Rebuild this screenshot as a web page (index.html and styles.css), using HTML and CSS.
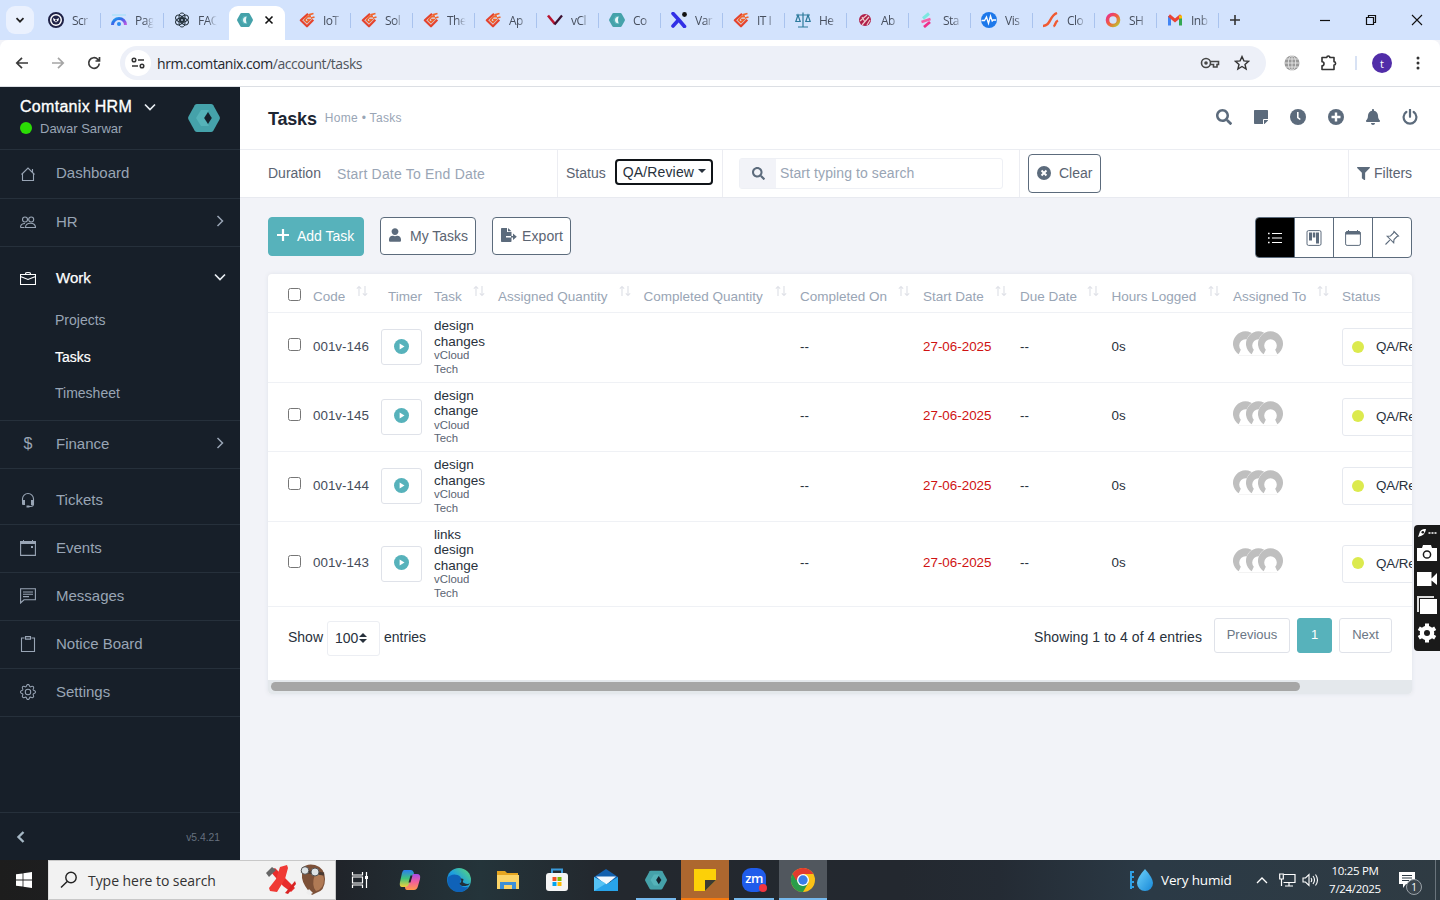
FILE: index.html
```html
<!DOCTYPE html>
<html lang="en">
<head>
<meta charset="utf-8">
<title>Tasks</title>
<link rel="stylesheet" href="styles.css">
</head>
<body>
<svg class="defs" width="0" height="0">
  <defs>
    <linearGradient id="rb" x1="0" y1="0" x2="1" y2="1"><stop offset="0" stop-color="#1fa4f0"/><stop offset=".35" stop-color="#2f6fe8"/><stop offset=".6" stop-color="#6a5ae8"/><stop offset="1" stop-color="#c45ae0"/></linearGradient>
    <linearGradient id="cp1" x1="0" y1="0" x2="0" y2="1"><stop offset="0" stop-color="#2a7df2"/><stop offset=".5" stop-color="#3fc47c"/><stop offset="1" stop-color="#f2d13c"/></linearGradient>
    <linearGradient id="cp2" x1="0" y1="0" x2="0" y2="1"><stop offset="0" stop-color="#a84bea"/><stop offset=".5" stop-color="#f2609a"/><stop offset="1" stop-color="#ff9a4a"/></linearGradient>
    <linearGradient id="edge" x1="0" y1="1" x2="1" y2="0"><stop offset="0" stop-color="#0c59a4"/><stop offset=".5" stop-color="#1d9fe0"/><stop offset="1" stop-color="#5fdc70"/></linearGradient>
    <linearGradient id="ring" x1="0" y1="0" x2="1" y2="1"><stop offset="0" stop-color="#e8308c"/><stop offset=".5" stop-color="#f2603c"/><stop offset="1" stop-color="#b8c832"/></linearGradient>
    <linearGradient id="drop" x1="0" y1="0" x2="1" y2="1"><stop offset="0" stop-color="#6fd2fa"/><stop offset="1" stop-color="#1788d8"/></linearGradient>
  </defs>
  <symbol id="hex" viewBox="0 0 32 28"><path fill="#45a2aa" d="M9 0h14q1.500 0 2.300 1.300L31.500 12.500q.8 1.500 0 3L25.300 26.700Q24.500 28 23 28H9q-1.500 0-2.300-1.300L.5 15.500q-.8-1.500 0-3L6.700 1.300Q7.500 0 9 0z"/><path fill="#55b3b9" d="M13 6h8l-5 8 5 8h-8l-5-8z"/></symbol>
  <symbol id="hexd" viewBox="0 0 32 28"><use href="#hex"/><path fill="#16202b" d="M20 8l3.800 6-3.800 6-3.800-6z"/></symbol>
  <symbol id="hexl" viewBox="0 0 32 28"><use href="#hex"/><path fill="#e8f6f8" d="M19 7q-7 1-7 7t7 7q-2-7 0-14z"/></symbol>
  <symbol id="red" viewBox="0 0 16 16"><path fill="none" stroke="#e5432d" stroke-width="2.200" stroke-linejoin="round" d="M9 1.800L1.800 8.200 8 14.300l6.300-6.500"/><path fill="none" stroke="#f0662f" stroke-width="1.800" d="M12 4.500L8.500 4.500 5.500 8.200 8 10.600l3-3H8M9.500 2.800l5-1.300M12 6l3.500-1"/></symbol>
  <symbol id="sort" viewBox="0 0 12 12"><path fill="none" stroke="#e0e2e8" stroke-width="1.200" d="M3 11V1.500M.8 3.700L3 1.500l2.200 2.200M9 1v9.500M6.800 8.300L9 10.500l2.200-2.200"/></symbol>
  <symbol id="play" viewBox="0 0 16 16"><circle cx="8" cy="8" r="8" fill="#57b2bb"/><path fill="#fff" d="M6 4.800L11.200 8 6 11.200z"/></symbol>
  <symbol id="av" viewBox="0 0 24 24"><circle cx="12" cy="12" r="12" fill="#fff"/><path fill="#bfbfbf" d="M5.500 22.400A12 12 0 1 1 18.500 22.400L16.500 18a6 6 0 1 0-9 0z"/><path fill="#ececec" d="M5.500 23.400h13v1h-13z"/></symbol>
  <symbol id="avs" viewBox="0 0 50 26"><use href="#av" width="25" height="25" x="0"/><use href="#av" width="25" height="25" x="13"/><use href="#av" width="25" height="25" x="25"/></symbol>
  <symbol id="mag" viewBox="0 0 512 512"><path fill="currentColor" d="M505 442.700L405.300 343c-4.500-4.500-10.600-7-17-7H372c27.600-35.300 44-79.700 44-128C416 93.100 322.900 0 208 0S0 93.100 0 208s93.100 208 208 208c48.300 0 92.700-16.400 128-44v16.300c0 6.400 2.500 12.500 7 17l99.700 99.700c9.400 9.400 24.600 9.400 33.900 0l28.300-28.300c9.400-9.400 9.400-24.600.1-34zM208 336c-70.700 0-128-57.200-128-128 0-70.700 57.200-128 128-128 70.700 0 128 57.200 128 128 0 70.700-57.200 128-128 128z"/></symbol>
  <symbol id="gear" viewBox="0 0 16 16"><path fill="currentColor" d="M8 4.754a3.246 3.246 0 1 0 0 6.492 3.246 3.246 0 0 0 0-6.492zM5.754 8a2.246 2.246 0 1 1 4.492 0 2.246 2.246 0 0 1-4.492 0z"/><path fill="currentColor" d="M9.796 1.343c-.527-1.790-3.065-1.790-3.592 0l-.094.319a.873.873 0 0 1-1.255.52l-.292-.16c-1.640-.892-3.433.902-2.540 2.541l.159.292a.873.873 0 0 1-.52 1.255l-.319.094c-1.790.527-1.790 3.065 0 3.592l.319.094a.873.873 0 0 1 .52 1.255l-.16.292c-.892 1.640.901 3.434 2.541 2.540l.292-.159a.873.873 0 0 1 1.255.52l.094.319c.527 1.790 3.065 1.790 3.592 0l.094-.319a.873.873 0 0 1 1.255-.52l.292.16c1.640.893 3.434-.902 2.540-2.541l-.159-.292a.873.873 0 0 1 .52-1.255l.319-.094c1.790-.527 1.790-3.065 0-3.592l-.319-.094a.873.873 0 0 1-.52-1.255l.16-.292c.893-1.640-.902-3.433-2.541-2.540l-.292.159a.873.873 0 0 1-1.255-.52l-.094-.319zm-2.633.283c.246-.835 1.428-.835 1.674 0l.094.319a1.873 1.873 0 0 0 2.693 1.115l.291-.16c.764-.415 1.600.42 1.184 1.185l-.159.292a1.873 1.873 0 0 0 1.116 2.692l.318.094c.835.246.835 1.428 0 1.674l-.319.094a1.873 1.873 0 0 0-1.115 2.693l.16.291c.415.764-.42 1.600-1.185 1.184l-.291-.159a1.873 1.873 0 0 0-2.693 1.116l-.094.318c-.246.835-1.428.835-1.674 0l-.094-.319a1.873 1.873 0 0 0-2.692-1.115l-.292.16c-.764.415-1.600-.42-1.184-1.185l.159-.291A1.873 1.873 0 0 0 1.945 8.930l-.319-.094c-.835-.246-.835-1.428 0-1.674l.319-.094A1.873 1.873 0 0 0 3.060 4.377l-.16-.292c-.415-.764.42-1.600 1.185-1.184l.292.159a1.873 1.873 0 0 0 2.692-1.115l.094-.319z"/></symbol>
</svg>

<header class="tabstrip">
  <div class="tabsearch"><svg width="10" height="10" viewBox="0 0 10 10"><path class="ln2" d="M1.500 3.200L5 6.700l3.500-3.500"/></svg></div>
  <div class="tab w"><svg viewBox="0 0 16 16"><circle cx="8" cy="8" r="7" fill="#fff" stroke="#1f2247" stroke-width="2"/><circle cx="8" cy="8" r="4.500" fill="#1f2247"/><path fill="#fff" d="M5 6l3 1.500L11 6l-.5 2.500L8 10.500 5.500 8.500z"/><circle cx="8" cy="8.500" r="1" fill="#1f2247"/></svg><span>Scr</span></div>
  <div class="tab w"><svg viewBox="0 0 16 16"><path d="M1.500 13A6.500 6.500 0 0 1 14.500 13" fill="none" stroke="url(#rb)" stroke-width="3"/><circle cx="8" cy="12" r="2" fill="#2a8cf0"/><path d="M1 3h14" stroke="#9de0f8" stroke-width="1"/></svg><span>Pag</span></div>
  <div class="tab w nosep"><svg viewBox="0 0 16 16" fill="none" stroke="#23303a" stroke-width="1"><ellipse cx="8" cy="5.200" rx="3" ry="4.200"/><ellipse cx="8" cy="5.200" rx="3" ry="4.200" transform="rotate(60 8 8)"/><ellipse cx="8" cy="5.200" rx="3" ry="4.200" transform="rotate(120 8 8)"/><ellipse cx="8" cy="5.200" rx="3" ry="4.200" transform="rotate(180 8 8)"/><ellipse cx="8" cy="5.200" rx="3" ry="4.200" transform="rotate(240 8 8)"/><ellipse cx="8" cy="5.200" rx="3" ry="4.200" transform="rotate(300 8 8)"/></svg><span>FAQ</span></div>
  <div class="tab active nosep"><svg viewBox="0 0 16 16"><use href="#hexl" y="1" width="16" height="14"/></svg><svg class="x" viewBox="0 0 10 10"><path d="M1.500 1.500l7 7M8.500 1.500l-7 7" stroke="#111" stroke-width="1.600"/></svg></div>
  <div class="tab"><svg><use href="#red"/></svg><span>IoT</span></div>
  <div class="tab"><svg><use href="#red"/></svg><span>Sol</span></div>
  <div class="tab"><svg><use href="#red"/></svg><span>The</span></div>
  <div class="tab"><svg><use href="#red"/></svg><span>Ap</span></div>
  <div class="tab"><svg viewBox="0 0 16 16"><path d="M1 3.500L8 12" stroke="#b81430" stroke-width="2.600"/><path d="M7.500 12.500L15 3.500" stroke="#3c1030" stroke-width="2.200"/></svg><span>vCl</span></div>
  <div class="tab"><svg viewBox="0 0 16 16"><use href="#hexl" y="1" width="16" height="14"/></svg><span>Co</span></div>
  <div class="tab"><svg viewBox="0 0 16 16"><path d="M2 1.500l6 6.500 5.500 6.500M7 8.500L2 14" stroke="#3230e6" stroke-width="3.600" fill="none" stroke-linecap="round"/><circle cx="13.500" cy="2.500" r="2.400" fill="#111"/></svg><span>Var</span></div>
  <div class="tab"><svg><use href="#red"/></svg><span>IT I</span></div>
  <div class="tab"><svg viewBox="0 0 16 16"><path d="M8 .5V15M1 3h14M3 15h10M3 3L.8 9.500h4.400zM13 3l-2.200 6.500h4.400z" fill="none" stroke="#2c7a9c" stroke-width="1.200"/></svg><span>He</span></div>
  <div class="tab"><svg viewBox="0 0 16 16"><circle cx="8" cy="8" r="6" fill="#b0204a"/><path d="M3 9l7-6M5 13l7-8M10 13l3-5M5 5l3 5" stroke="#ecc" stroke-width="1.200"/></svg><span>Ab</span></div>
  <div class="tab"><svg viewBox="0 0 16 16"><path d="M4 6.500l6-5" stroke="#7ce8e0" stroke-width="3"/><path d="M2.500 10l9-3" stroke="#f55fa5" stroke-width="2.600"/><path d="M5 15l6-5" stroke="#ee2f8a" stroke-width="2.800"/></svg><span>Sta</span></div>
  <div class="tab"><svg viewBox="0 0 16 16"><circle cx="8" cy="8" r="8" fill="#1d78ea"/><path d="M.5 8.500h3L5.500 5l2 6.500L9.500 4l1.700 5 1-1h3" fill="none" stroke="#fff" stroke-width="1.300"/></svg><span>Vis</span></div>
  <div class="tab"><svg viewBox="0 0 16 16"><path d="M0 14c8 0 6-10 14-13M10.500 14.500c2.500-1 1-4.500 4.500-6" fill="none" stroke="#f05a32" stroke-width="2.400"/></svg><span>Clo</span></div>
  <div class="tab"><svg viewBox="0 0 16 16"><circle cx="8" cy="8" r="5.500" fill="none" stroke="url(#ring)" stroke-width="3.600"/></svg><span>SH</span></div>
  <div class="tab"><svg viewBox="0 0 16 16"><path d="M2.500 13.500V4" stroke="#4285f4" stroke-width="3"/><path d="M13.500 13.500V4" stroke="#34a853" stroke-width="3"/><path d="M2 3.500l6 5 6-5" fill="none" stroke="#ea4335" stroke-width="3"/><path d="M12 3.500h3v3h-3z" fill="#fbbc04"/></svg><span>Inb</span></div>
  <svg class="newtab" width="12" height="12" viewBox="0 0 12 12"><path d="M6 1v10M1 6h10" stroke="#333" stroke-width="1.600"/></svg>
  <div class="winbtns">
    <svg width="12" height="12" viewBox="0 0 12 12"><path d="M1 6.500h10" stroke="#111" stroke-width="1.200"/></svg>
    <svg width="12" height="12" viewBox="0 0 12 12"><path d="M1.500 3.500h7v7h-7zM3.500 3.500v-2h7v7h-2" fill="none" stroke="#111" stroke-width="1.200"/></svg>
    <svg width="12" height="12" viewBox="0 0 12 12"><path d="M1 1l10 10M11 1L1 11" stroke="#111" stroke-width="1.100"/></svg>
  </div>
</header>

<div class="toolbar">
  <svg class="nav" viewBox="0 0 14 14"><path class="ln" d="M13 7H2M7 1.800L1.800 7 7 12.200"/></svg>
  <svg class="nav dim" viewBox="0 0 14 14"><path class="ln" d="M1 7h11M7 1.800L12.200 7 7 12.200"/></svg>
  <svg class="nav" viewBox="0 0 14 14"><path class="ln" d="M12.300 7.500a5.300 5.300 0 1 1-1.500-4.200l1.500 1.600M12.500 1v4H8.500"/></svg>
  <div class="omni">
    <div class="site"><svg width="14" height="12" viewBox="0 0 14 12"><g fill="none" stroke="#333" stroke-width="1.500"><circle cx="3" cy="3" r="1.800"/><path d="M7 3h6M1 9h6"/><circle cx="11" cy="9" r="1.800"/></g></svg></div>
    <div class="url">hrm.comtanix.com<span>/account/tasks</span></div>
    <svg width="20" height="14" viewBox="0 0 20 14"><g fill="none" stroke="#474747" stroke-width="1.600"><circle cx="6" cy="7" r="4.500"/><path d="M10.200 5.500H18.500v3h-1.500v2.500h-3.500V8.500h-3.300"/></g><circle cx="6" cy="7" r="1.800" fill="#474747"/></svg>
    <svg class="star" width="16" height="16" viewBox="0 0 16 16"><path fill="none" stroke="#333" stroke-width="1.400" d="M8 1.600l1.900 4.300 4.700.4-3.600 3.100 1.100 4.600L8 11.500 3.900 14 5 9.400 1.400 6.300l4.700-.4z"/></svg>
  </div>
  <svg class="globe" width="16" height="16" viewBox="0 0 16 16"><circle cx="8" cy="8" r="7.500" fill="#999"/><path d="M8 0v16M0 8h16M1.500 4h13M1.500 12h13" stroke="#eee" stroke-width=".8"/><ellipse cx="8" cy="8" rx="3.700" ry="7.500" fill="none" stroke="#eee" stroke-width=".8"/></svg>
  <svg class="ext" width="18" height="18" viewBox="0 0 18 18"><path d="M2 3.500h4.800a1.500 1.500 0 0 1 3 0H14v4.300a1.600 1.600 0 0 1 0 3.200V15.500H2v-3.700a2 2 0 0 0 0-4z" fill="none" stroke="#333" stroke-width="1.600" stroke-linejoin="round"/></svg>
  <i class="tsep"></i>
  <div class="profile">t</div>
  <svg class="dots" width="4" height="16" viewBox="0 0 4 16" fill="#333"><circle cx="2" cy="3" r="1.500"/><circle cx="2" cy="8" r="1.500"/><circle cx="2" cy="13" r="1.500"/></svg>
</div>

<div class="app">
  <aside class="side">
    <div class="brand">
      <div class="names"><div class="bname">Comtanix HRM <svg width="12" height="8" viewBox="0 0 12 8"><path d="M1 1.500l5 5 5-5" fill="none" stroke="#e8edf2" stroke-width="1.700"/></svg></div><div class="user"><i></i>Dawar Sarwar</div></div>
      <svg width="32" height="28"><use href="#hexd"/></svg>
    </div>
    <a class="item"><svg viewBox="0 0 16 16"><path d="M2.500 7.500V14.500h11V7.500M1.500 8.500L8 2l6.500 6.500M12.500 6V3"/></svg>Dashboard</a>
    <a class="item"><svg viewBox="0 0 16 16"><circle cx="5" cy="5.500" r="2.500"/><circle cx="11.200" cy="5.500" r="2.500"/><path d="M.5 13.500c0-3 2-4 4.500-4M5.500 13.500c0-3 2-4.200 5-4.200s5 1.200 5 4.200zM.5 13.500h4"/></svg>HR<svg class="chev" viewBox="0 0 8 12"><path d="M1.500 1l5 5-5 5"/></svg></a>
    <div class="group">
      <a class="sub0"><svg viewBox="0 0 16 16"><path d="M.5 4.500h15v10H.5zM5.500 4.500c0-2 .5-2 2.500-2s2.500 0 2.500 2M.5 6.500L8 9.500l7.500-3"/></svg>Work<svg class="down" viewBox="0 0 12 8"><path d="M1 1.500l5 5 5-5"/></svg></a>
      <a class="sub">Projects</a><a class="sub on">Tasks</a><a class="sub">Timesheet</a>
    </div>
    <a class="item"><b class="dollar">$</b>Finance<svg class="chev" viewBox="0 0 8 12"><path d="M1.500 1l5 5-5 5"/></svg></a>
    <a class="item tall"><svg viewBox="0 0 16 16"><path d="M2.500 9V7a5.500 5.500 0 0 1 11 0v5c0 1.500-1 2.500-3 2.500H8"/><path class="fl" d="M2 8h3v5H3a1 1 0 0 1-1-1zM11 8h3v5h-3zM6.500 13.500h3v2h-3z"/></svg>Tickets</a>
    <a class="item"><svg viewBox="0 0 16 16"><path d="M.6 2.500h14.800v12.900H.6z"/><path class="fl" d="M0 1h3V0h1v1h8V0h1v1h3v3H0zM11 6h2v2h-2z"/></svg>Events</a>
    <a class="item"><svg viewBox="0 0 16 16"><path d="M.6.8h14.800v11H4L.6 15zM3 4h10M3 6.300h10M3 8.600h6"/></svg>Messages</a>
    <a class="item"><svg viewBox="0 0 16 16"><path d="M4.500 2h-3v13.500h13V2h-3M5.500.6h5v2.500h-5z"/></svg>Notice Board</a>
    <a class="item"><svg class="ns"><use href="#gear"/></svg>Settings</a>
    <div class="sfoot"><svg width="9" height="12" viewBox="0 0 9 12"><path d="M7.500 1L2.500 6l5 5" fill="none" stroke="#a5b7c4" stroke-width="2.400"/></svg><span>v5.4.21</span></div>
  </aside>

  <main class="main">
    <div class="top">
      <h1>Tasks</h1><span class="crumb">Home • Tasks</span>
      <div class="tools">
        <svg><use href="#mag"/></svg>
        <svg viewBox="0 0 448 512"><path d="M312 320h136V56c0-13.300-10.700-24-24-24H24C10.700 32 0 42.700 0 56v400c0 13.300 10.700 24 24 24h264V344c0-13.200 10.800-24 24-24zm129 55l-98 98c-4.500 4.500-10.600 7-17 7h-6V352h128v6.100c0 6.300-2.500 12.400-7 16.900z"/></svg>
        <svg viewBox="0 0 16 16"><circle cx="8" cy="8" r="8"/><path d="M7.800 3v5.500l2.500 2" fill="none" stroke="#fff" stroke-width="1.600"/></svg>
        <svg viewBox="0 0 16 16"><circle cx="8" cy="8" r="8"/><path d="M8 3.500v9M3.500 8h9" stroke="#fff" stroke-width="2.400"/></svg>
        <svg viewBox="0 0 448 512"><path d="M224 512c35.320 0 63.970-28.650 63.970-64H160.030c0 35.350 28.650 64 63.970 64zm215.390-149.710c-19.320-20.760-55.470-51.990-55.470-154.290 0-77.700-54.480-139.900-127.940-155.160V32c0-17.670-14.320-32-31.980-32s-31.980 14.330-31.980 32v20.840C118.560 68.100 64.080 130.300 64.080 208c0 102.300-36.150 133.530-55.470 154.290-6 6.450-8.660 14.160-8.610 21.710.11 16.400 12.980 32 32.100 32h383.800c19.120 0 32-15.600 32.100-32 .05-7.550-2.610-15.270-8.610-21.710z"/></svg>
        <svg viewBox="0 0 16 16"><path d="M4.300 3a6.400 6.400 0 1 0 7.400 0M8 .8v7" fill="none" stroke="#5c6b7c" stroke-width="2.200" stroke-linecap="round"/></svg>
      </div>
    </div>
    <div class="filters">
      <div class="f-dur"><span>Duration</span><em>Start Date To End Date</em></div>
      <div class="f-status"><span>Status</span><div class="sel">QA/Review<i></i></div></div>
      <div class="f-search"><div class="sbox"><b><svg width="13" height="13"><use href="#mag"/></svg></b><span>Start typing to search</span></div></div>
      <div class="clear"><svg width="14" height="14" viewBox="0 0 16 16"><circle cx="8" cy="8" r="8" fill="#5c6b7c"/><path d="M5.200 5.200l5.600 5.600M10.800 5.200l-5.600 5.600" stroke="#fff" stroke-width="2.200"/></svg>Clear</div>
      <div class="f-more"><svg width="13" height="13" viewBox="0 0 512 512"><path fill="#5c6b7c" d="M487.976 0H24.028C2.710 0-8.047 25.866 7.058 40.971L192 225.941V432c0 7.831 3.821 15.170 10.237 19.662l80 55.980C298.020 518.690 320 507.493 320 487.980V225.941l184.947-184.970C520.021 25.896 509.338 0 487.976 0z"/></svg>Filters</div>
    </div>
    <div class="content">
      <div class="actions">
        <div class="btn add"><svg width="12" height="12" viewBox="0 0 12 12"><path d="M6 0v12M0 6h12" stroke="#fff" stroke-width="2.200"/></svg>Add Task</div>
        <div class="btn my"><svg width="12" height="14" viewBox="0 0 448 512"><path fill="#5c6b7c" d="M224 256c70.700 0 128-57.300 128-128S294.700 0 224 0 96 57.300 96 128s57.300 128 128 128zm89.600 32h-16.700c-22.200 10.200-46.900 16-72.900 16s-50.600-5.800-72.900-16h-16.700C60.200 288 0 348.200 0 422.400V464c0 26.500 21.500 48 48 48h352c26.500 0 48-21.500 48-48v-41.600c0-74.200-60.200-134.400-134.400-134.400z"/></svg>My Tasks</div>
        <div class="btn exp"><svg width="16" height="14" viewBox="0 0 16 14"><path fill="#5c6b7c" d="M0 .8A.8.800 0 0 1 .8 0H6v4h4.500v4H5v1.500h5.500v3.700a.8.800 0 0 1-.8.800H.8a.8.800 0 0 1-.8-.8zM7 0l3.500 3.300H7zM12 5.500l3.800 3.200L12 12V9.500H10V8h2z"/></svg>Export</div>
        <div class="views">
          <div class="on"><svg viewBox="0 0 16 16"><path d="M5 3.500h10M5 8h10M5 12.500h10" stroke="#fff" stroke-width="1.100"/><path d="M1 2.700h1.600v1.600H1zM1 7.200h1.600v1.600H1zM1 11.700h1.600v1.600H1z" fill="#fff"/></svg></div>
          <div><svg viewBox="0 0 16 16"><rect x="1" y=".6" width="14" height="14.800" rx="1.500" fill="none" stroke="#5c6b7c"/><path d="M3 2.500h3v8H3zM6.800 2.500h2.500v5H6.800zM10 2.500h3v11h-3z" fill="#5c6b7c"/></svg></div>
          <div><svg viewBox="0 0 16 16"><rect x=".6" y="1.600" width="14.800" height="13.800" rx="1.500" fill="none" stroke="#5c6b7c"/><path d="M.5 4.500V2.500L2 1h1V0h1v1h8V0h1v1h1l1.500 1.500v2z" fill="#5c6b7c"/></svg></div>
          <div><svg viewBox="0 0 16 16"><path d="M10 1.500L14.500 6l-1.500.5-3 3-.3 3.300L3.200 6.300l3.300-.3 3-3zM5.800 10.200L1.500 14.500" fill="none" stroke="#5c6b7c" stroke-width="1.100"/></svg></div>
        </div>
      </div>
      <section class="card">
        <div class="row head">
          <i class="cb"></i><span>Code<svg><use href="#sort"/></svg></span><span class="tm">Timer</span><span>Task<svg><use href="#sort"/></svg></span><span>Assigned Quantity<svg><use href="#sort"/></svg></span><span>Completed Quantity<svg><use href="#sort"/></svg></span><span>Completed On<svg><use href="#sort"/></svg></span><span>Start Date<svg><use href="#sort"/></svg></span><span>Due Date<svg><use href="#sort"/></svg></span><span>Hours Logged<svg><use href="#sort"/></svg></span><span>Assigned To<svg><use href="#sort"/></svg></span><span>Status</span>
        </div>
        <div class="row"><i class="cb"></i><span class="code">001v-146</span><div class="pl"><svg><use href="#play"/></svg></div><div class="task"><b>design<br>changes</b><small>vCloud<br>Tech</small></div><span></span><span></span><span>--</span><span class="red">27-06-2025</span><span>--</span><span>0s</span><svg class="avs"><use href="#avs"/></svg><div class="st"><i></i>QA/Review</div></div>
        <div class="row"><i class="cb"></i><span class="code">001v-145</span><div class="pl"><svg><use href="#play"/></svg></div><div class="task"><b>design<br>change</b><small>vCloud<br>Tech</small></div><span></span><span></span><span>--</span><span class="red">27-06-2025</span><span>--</span><span>0s</span><svg class="avs"><use href="#avs"/></svg><div class="st"><i></i>QA/Review</div></div>
        <div class="row"><i class="cb"></i><span class="code">001v-144</span><div class="pl"><svg><use href="#play"/></svg></div><div class="task"><b>design<br>changes</b><small>vCloud<br>Tech</small></div><span></span><span></span><span>--</span><span class="red">27-06-2025</span><span>--</span><span>0s</span><svg class="avs"><use href="#avs"/></svg><div class="st"><i></i>QA/Review</div></div>
        <div class="row"><i class="cb"></i><span class="code">001v-143</span><div class="pl"><svg><use href="#play"/></svg></div><div class="task"><b>links<br>design<br>change</b><small>vCloud<br>Tech</small></div><span></span><span></span><span>--</span><span class="red">27-06-2025</span><span>--</span><span>0s</span><svg class="avs"><use href="#avs"/></svg><div class="st"><i></i>QA/Review</div></div>
        <div class="tfoot">
          <span>Show</span><div class="len">100<svg width="8" height="10" viewBox="0 0 8 10"><path fill="#28313c" d="M4 0l4 4H0zM4 10L0 6h8z"/></svg></div><span>entries</span>
          <span class="info">Showing 1 to 4 of 4 entries</span>
          <div class="pg prev">Previous</div><div class="pg cur">1</div><div class="pg next">Next</div>
        </div>
        <div class="scroll"><i></i></div>
      </section>
    </div>
  </main>
</div>

<div class="rec">
  <svg width="20" height="10" viewBox="0 0 20 10"><path d="M1 9L3 3.500C4.500 1.500 6 1 9 1 8.500 4 7.500 6 5 7.500z" fill="#fff"/><circle cx="5.800" cy="4.200" r="1.300" fill="#1a1a1a"/><path d="M11.500 5h2M14.500 5h2M17.500 5h2" stroke="#fff" stroke-width="1.500"/></svg>
  <svg width="20" height="17" viewBox="0 0 20 17"><path fill="#fff" d="M0 3h5l1-3h8l1 3h5v13H0z"/><circle cx="10" cy="9.500" r="3.600" fill="none" stroke="#1a1a1a" stroke-width="1.500"/></svg>
  <svg width="20" height="14" viewBox="0 0 20 14"><path fill="#fff" d="M0 0h14.500v14H0zM14.500 6.500L20 1v12l-5.500-4.500z"/></svg>
  <svg width="20" height="18" viewBox="0 0 20 18"><path fill="#ddd" d="M0 0h17v2H2v14H0z"/><path fill="#fff" d="M3 3h17v15H3z"/></svg>
  <svg width="20" height="20" viewBox="0 0 20 20"><circle cx="10" cy="10" r="5" fill="none" stroke="#fff" stroke-width="4.500"/><path d="M10 .5v19M1.800 5.200l16.400 9.600M1.800 14.800l16.400-9.600" stroke="#fff" stroke-width="4"/><circle cx="10" cy="10" r="3" fill="#1a1a1a"/></svg>
</div>

<footer class="taskbar">
  <div class="start"><svg width="16" height="16" viewBox="0 0 16 16"><path fill="#fff" d="M0 2.300L6.600 1.400V7.600H0zM7.400 1.300L16 0v7.600H7.400zM0 8.400h6.600v6.200L0 13.700zM7.400 8.400H16V16l-8.600-1.300z"/></svg></div>
  <div class="wsearch">
    <svg width="18" height="18" viewBox="0 0 18 18"><circle cx="11" cy="6.500" r="5.200" fill="none" stroke="#222" stroke-width="1.400"/><path d="M7.200 10.500L1 16.500" stroke="#222" stroke-width="1.500"/></svg>
    <span>Type here to search</span>
    <svg class="plane" width="62" height="32" viewBox="0 0 62 32"><path d="M5 7l5-3 14 14 6 6-4 4-8-6z" fill="#e82c2c"/><path d="M15 3l7-2 1 3-3 11-8 13-7-1-1-3 7-9z" fill="#f03a35"/><path d="M30 17l1 3-8 10-3-1z" fill="#d82424"/><path d="M1 9l6-6 4 3-7 7z" fill="#666"/><path d="M37 4q5-5 13-3 10 3 10 14 0 12-9 14l-4 2q-9-10-10-17z" fill="#7d5138"/><path d="M50 10q8-2 9 5 0 10-8 12-5-5-1-17z" fill="#b07a55"/><path d="M36 7l23 3" stroke="#4a3a32" stroke-width="3"/><circle cx="40" cy="6.500" r="3.800" fill="#dde3e6" stroke="#555"/><circle cx="50" cy="8" r="4" fill="#dde3e6" stroke="#555"/><path d="M41 29l3-4 4 4-4 2z" fill="#eee"/></svg>
  </div>
  <div class="ti"><svg width="18" height="18" viewBox="0 0 18 18"><path d="M1.500 1v3h10V1M1.500 17v-3h10v3M1.500 6h10v6h-10zM15.500 1v16" fill="none" stroke="#fff" stroke-width="1.200"/><path fill="#fff" d="M14 5h3v3h-3z"/></svg></div>
  <div class="ti w52"><svg width="24" height="24" viewBox="0 0 24 24"><path d="M6 2h7q2 0 3 3l-3 11q-1 3-4 3H4q-3 0-2-5l2-9q1-3 2-3z" fill="url(#cp1)"/><path d="M15 6h4q4 0 3 5l-2 7q-1 4-4 4H9q-2 0-2-3 3 0 4-3l3-8z" fill="url(#cp2)"/><path d="M12.500 7.500h2l-2 7h-2z" fill="#22262c"/></svg></div>
  <div class="ti w46"><svg width="24" height="24" viewBox="0 0 24 24"><circle cx="12" cy="12" r="12" fill="url(#edge)"/><path d="M.5 10q4-5 10-3 5 2 3 6-2 5 3 6 3 .5 5-.5-4 6-10 5.500Q1 23 .5 10z" fill="#0f62b8"/><path d="M13.500 10.500q2 3-1 5 1 3 6 2.500 3-.5 4.500-2.500-3 1-6-.5-2-1-.5-3 .5-2-3-1.500z" fill="#22303a"/></svg></div>
  <div class="ti w52"><svg width="22" height="20" viewBox="0 0 22 20"><path fill="#e5a520" d="M0 1h8l2 2h11v5H0z"/><path fill="#fbd468" d="M0 5h22v14H0z"/><path fill="#3d8fd8" d="M3 19v-7h16v7h-4v-4H7v4z"/></svg></div>
  <div class="ti w46"><svg width="24" height="24" viewBox="0 0 24 24"><path d="M7 6V1.500h10V6" fill="none" stroke="#3a9bdc" stroke-width="2"/><rect x="1" y="5" width="22" height="18" rx="3" fill="#f5f5f5"/><path fill="#f25022" d="M7.500 9h4v4h-4z"/><path fill="#7fba00" d="M12.500 9h4v4h-4z"/><path fill="#00a4ef" d="M7.500 14h4v4h-4z"/><path fill="#ffb900" d="M12.500 14h4v4h-4z"/></svg></div>
  <div class="ti w52"><svg width="24" height="22" viewBox="0 0 24 22"><path fill="#1360ad" d="M0 8L12 0l12 8v4H0z"/><path fill="#f4f8fc" d="M2 7.500h20L12 16z"/><path fill="#28a4ea" d="M0 8l12 7.500L24 8v14H0z"/><path fill="#55c3f5" d="M0 22l12-7.500L0 8z"/></svg></div>
  <div class="ti run hexrun"><svg width="22" height="20"><use href="#hexd"/></svg></div>
  <div class="ti note"><svg width="22" height="22" viewBox="0 0 22 22"><path fill="#fcd008" d="M0 0h22v11L11 22H0z"/><path fill="#3c3a33" d="M11 22V11h11z"/></svg></div>
  <div class="ti run zoom"><div>zm<i></i></div></div>
  <div class="ti chrome"><svg width="24" height="24" viewBox="0 0 24 24"><circle cx="12" cy="12" r="12" fill="#fbc116"/><path d="M12 12L1.600 6A12 12 0 0 0 12 24l5.200-9z" fill="#2a9d4a"/><path d="M1.600 6A12 12 0 0 1 22.400 6H12v6H5z" fill="#e33b2e"/><circle cx="12" cy="12" r="6" fill="#fff"/><circle cx="12" cy="12" r="4.700" fill="#3a7de8"/></svg></div>
  <div class="tray">
    <svg width="26" height="24" viewBox="0 0 26 24"><path d="M3 3v18M2 4h4M2 9h4M2 14h4M2 19h4" stroke="#2fa0e4" stroke-width="2"/><path fill="url(#drop)" d="M17 1q8 9 8 14a8 8 0 0 1-16 0q0-5 8-14z"/></svg>
    <span class="hum">Very humid</span>
    <svg class="up" width="12" height="8" viewBox="0 0 12 8"><path d="M1 7l5-5 5 5" fill="none" stroke="#fff" stroke-width="1.300"/></svg>
    <svg class="net" width="17" height="14" viewBox="0 0 17 14"><path d="M5 1.500h11v8H4.500M10 9.500V13M6 13h8M2.500 6v7M.7 1h3.600v5H.7z" fill="none" stroke="#fff" stroke-width="1.200"/></svg>
    <svg class="vol" width="17" height="14" viewBox="0 0 17 14"><path d="M1 5h2.500L7 1.500v11L3.500 9H1zM9 5q1.500 2 0 4M11 3q3 4 0 8M13.500 1.500q4 5.500 0 11" fill="none" stroke="#fff" stroke-width="1.100"/></svg>
    <div class="clock">10:25 PM<br>7/24/2025</div>
    <div class="notif"><svg width="17" height="17" viewBox="0 0 17 17"><path fill="#fff" d="M0 0h16v12H7l-3 4v-4H0z"/><path d="M3 3.500h10M3 6h10M3 8.500h7" stroke="#2d3a44" stroke-width="1.100"/></svg><i>1</i></div>
  </div>
</footer>
</body>
</html>
```
FILE: styles.css
```css
* { box-sizing: border-box; }
body { margin: 0; width: 1440px; height: 900px; overflow: hidden; display: flex; flex-direction: column; font-family: "Liberation Sans", Arial, sans-serif; font-size: 14px; color: #28313c; background: #f2f3f8; position: relative; }
svg { display: block; flex: none; }
i, em { font-style: normal; }
.defs { position: absolute; }

/* browser chrome */
.tabstrip { height: 40px; flex: none; background: #d3e3fd; display: flex; align-items: center; padding-left: 6px; font-family: "Open Sans", sans-serif; font-size: 12px; color: #474f5e; }
.tabsearch { width: 28px; height: 28px; border-radius: 9px; background: #eaf1fe; display: flex; align-items: center; justify-content: center; margin-right: 4px; }
.ln2 { fill: none; stroke: #222; stroke-width: 1.7; }
.tab { width: 62px; height: 40px; flex: none; display: flex; align-items: center; padding-left: 10px; gap: 8px; background: linear-gradient(#a9c3ee, #a9c3ee) right 13px / 1px 15px no-repeat; }
.tab.w { width: 63px; }
.tab svg { width: 16px; height: 16px; }
.tab span { width: 22px; white-space: nowrap; letter-spacing: -.5px; -webkit-mask-image: linear-gradient(90deg, #000 45%, transparent 85%); mask-image: linear-gradient(90deg, #000 45%, transparent 85%); }
.tab.nosep { background: none; }
.tab.active { margin: 6px 4px 0 2px; width: 56px; height: 34px; background: #fff; border-radius: 9px 9px 0 0; padding: 0 0 6px 8px; gap: 11px; }
.tab.active .x { width: 10px; height: 10px; }
.newtab { margin-left: 10px; }
.winbtns { margin-left: auto; display: flex; gap: 34px; padding-right: 17px; }
.toolbar { height: 46px; flex: none; background: #fff; border-radius: 8px 8px 0 0; display: flex; align-items: center; padding-left: 15px; font-family: "Open Sans", sans-serif; }
.nav { width: 14px; height: 14px; margin-right: 22px; }
.nav.dim { opacity: .45; }
.ln { fill: none; stroke: #3a3a3a; stroke-width: 1.7; }
.omni { width: 1146px; height: 34px; margin-left: -3px; border-radius: 17px; background: #edf0f8; display: flex; align-items: center; padding: 0 16px 0 5px; }
.site { width: 26px; height: 26px; border-radius: 13px; background: #fff; display: flex; align-items: center; justify-content: center; margin-right: 6px; }
.url { flex: 1; font-size: 14px; letter-spacing: -.45px; color: #24272c; }
.url span { color: #50555c; }
.star { margin-left: 14px; }
.globe { margin-left: 18px; }
.ext { margin-left: 20px; }
.tsep { width: 2px; height: 14px; background: #d8e2f4; margin: 0 15px 0 17px; }
.profile { width: 20px; height: 20px; border-radius: 50%; background: #512da8; color: #fff; font-size: 11px; display: flex; align-items: center; justify-content: center; }
.dots { margin-left: 24px; }

/* application shell */
.app { height: 774px; flex: none; display: flex; border-top: 1px solid #dcdfe4; }
.side { width: 240px; flex: none; background: #171f29; color: #99a5b5; display: flex; flex-direction: column; font-size: 15px; }
.brand { height: 63px; flex: none; display: flex; justify-content: space-between; padding: 11px 20px 0; border-bottom: 1px solid #26303b; }
.brand > svg { margin-top: 6px; }
.bname { color: #fff; font-size: 16px; line-height: 18px; letter-spacing: .3px; -webkit-text-stroke: .35px #fff; display: flex; align-items: center; gap: 12px; }
.user { font-size: 13px; line-height: 16px; margin-top: 5px; display: flex; align-items: center; gap: 8px; }
.user i { width: 12px; height: 12px; border-radius: 50%; background: #2bdc05; margin-top: -3px; }
.item { height: 48px; flex: none; display: flex; align-items: center; padding: 0 16px 3px 20px; border-bottom: 1px solid #26303b; }
.brand + .item { height: 49px; }
.item.tall { height: 56px; padding-top: 7px; padding-bottom: 2px; }
.side a svg { width: 16px; height: 16px; margin: 2px 20px 0 0; fill: none; stroke: #99a5b5; stroke-width: 1.1; }
.side a svg .fl { fill: #99a5b5; stroke: none; }
.side a svg.ns { stroke: none; }
.side a svg.chev { width: 8px; height: 12px; margin: 0 0 0 auto; stroke-width: 1.5; }
.side a svg.down { width: 12px; height: 8px; margin: 0 0 0 auto; stroke-width: 1.7; stroke: #e8edf2; }
.dollar { width: 16px; margin-right: 20px; text-align: center; font-weight: 400; font-size: 16px; padding-top: 2px; }
.group { height: 174px; flex: none; padding-top: 15px; border-bottom: 1px solid #26303b; }
.sub0 { height: 30px; display: flex; align-items: center; padding: 0 14px 0 20px; color: #fff; -webkit-text-stroke: .25px #fff; }
.side a.sub0 svg:first-child { stroke: #fff; }
.sub { display: block; height: 36.500px; line-height: 36.500px; padding-left: 55px; font-size: 14px; }
.sub0 + .sub { margin-top: 10px; }
.sub.on { color: #fff; -webkit-text-stroke: .2px #fff; }
.sfoot { margin-top: auto; height: 48px; flex: none; border-top: 1px solid #26303b; display: flex; align-items: center; justify-content: space-between; padding: 1px 20px 0 16px; font-size: 10.300px; color: #66717f; }

.main { flex: 1; min-width: 0; display: flex; flex-direction: column; }
.top { height: 63px; flex: none; background: #fff; border-bottom: 1px solid #ebedf2; display: flex; align-items: center; padding: 0 22px 0 28px; }
h1 { margin: 2px 8px 0 0; font-size: 18px; letter-spacing: -.2px; color: #1d2633; }
.crumb { font-size: 12px; letter-spacing: .32px; color: #99a5b5; }
.tools { margin-left: auto; display: flex; gap: 21.200px; padding-bottom: 2px; }
.tools svg { width: 16px; height: 16px; fill: #5c6b7c; color: #5c6b7c; }
.filters { height: 48px; flex: none; background: #fff; border-bottom: 1px solid #e8eaf0; display: flex; align-items: center; color: #5b6472; }
.filters > div { display: flex; align-items: center; }
.f-dur { width: 318px; height: 47px; padding-left: 28px; gap: 16px; border-right: 1px solid #ecedf2; }
.f-dur > span, .f-status > span, .sbox span { margin-top: -1px; }
.f-dur em { color: #99a5b5; letter-spacing: .2px; padding-top: 1px; }
.f-status { width: 165px; height: 47px; padding-left: 8px; gap: 9px; border-right: 1px solid #ecedf2; }
.sel { width: 98px; height: 26px; border: 2px solid #101418; border-radius: 4px; color: #28313c; margin-top: -4px; padding: 1px 5px 0 6px; letter-spacing: .15px; display: flex; align-items: center; gap: 4px; }
.sel i { border: 4px solid transparent; border-top-color: #28313c; border-bottom: 0; margin-top: -2px; }
.f-search { width: 297px; height: 47px; padding-left: 16px; border-right: 1px solid #ecedf2; }
.sbox { width: 264px; height: 31px; border: 1px solid #eef0f5; border-radius: 3px; display: flex; align-items: center; color: #99a5b5; letter-spacing: .1px; }
.sbox b { width: 36px; height: 29px; background: #f2f3f8; display: flex; align-items: center; justify-content: center; color: #5c6b7c; margin-right: 4px; }
.clear { width: 73px; height: 39px; margin-left: 8px; border: 1px solid #5c6b7c; border-radius: 4px; padding: 0 0 1px 8px; gap: 8px; }
.f-more { margin-left: auto; height: 47px; width: 92px; border-left: 1px solid #ecedf2; padding: 0 0 1px 8px; gap: 4px; }
.content { flex: 1; padding: 19px 28px 0; }
.actions { height: 57px; display: flex; align-items: flex-start; color: #5b6472; }
.btn { height: 38px; display: flex; align-items: center; background: #fff; border: 1px solid #5c6b7c; border-radius: 4px; padding-left: 8px; gap: 9px; margin-right: 16px; }
.btn svg { margin-top: -2px; }
.btn.add { width: 96px; height: 39px; padding-bottom: 1px; gap: 8px; background: #57b2bb; border-color: #57b2bb; color: #fff; }
.btn.my { width: 96px; }
.btn.exp { width: 79px; gap: 5px; letter-spacing: .1px; }
.views { margin-left: auto; height: 41px; display: flex; border: 1px solid #5c6b7c; border-radius: 4px; overflow: hidden; background: #fff; }
.views div { width: 39px; display: flex; align-items: center; justify-content: center; border-left: 1px solid #5c6b7c; }
.views div.on { width: 38px; background: #000; border: 0; }
.views svg { width: 16px; height: 16px; }
.card { width: 1144px; height: 420px; background: #fff; overflow: hidden; border-radius: 4px; box-shadow: 0 0 4px #dfe2e9; font-size: 13.4px; display: flex; flex-direction: column; }
.row { display: grid; grid-template-columns: 25px 68px 53px 64px 145.500px 156.500px 123px 97px 91.500px 121.500px 109px 110px; padding-left: 20px; align-items: center; flex: none; border-bottom: 1px solid #eff1f5; height: 69.500px; width: 1184px; }
.row:nth-child(5) { height: 85px; }
.row.head { height: 39px; color: #99a5b5; font-size: 13.5px; }
.row.head span { display: flex; justify-content: space-between; align-items: center; padding: 6px 13px 0 0; white-space: nowrap; }
.row.head span.tm { padding-left: 7px; }
.row.head svg { width: 12px; height: 12px; margin-top: -10px; }
.cb { width: 13px; height: 13px; border: 1px solid #767676; border-radius: 2.5px; background: #fff; margin-top: -5px; }
.head .cb { margin-top: 2px; }
.row:not(.head) > span { margin-top: -2px; }
.row .code { color: #454c5a; }
.red { color: #cf1212; }
.pl { width: 41px; height: 36px; border: 1px solid #dfe2e9; border-radius: 3px; display: flex; align-items: center; justify-content: center; }
.pl svg { width: 15px; height: 15px; margin-top: -2px; }
.task b { display: block; font-weight: 400; line-height: 15.600px; font-size: 13.500px; }
.task small { display: block; font-size: 11.400px; line-height: 13.500px; color: #5b6472; }
.avs { width: 50px; height: 26px; margin-top: -6px; }
.st { width: 140px; height: 38px; border: 1px solid #e6e9ef; border-radius: 3px; display: flex; align-items: center; padding: 0 0 1px 9px; gap: 12px; white-space: nowrap; letter-spacing: -.1px; }
.st i { width: 12px; height: 12px; border-radius: 50%; background: #dcea4e; }
.tfoot { flex: 1; display: flex; align-items: flex-start; padding: 11px 20px 0; font-size: 14px; }
.tfoot > span { line-height: 16px; margin-top: 11px; }
.len { width: 53px; height: 35px; margin: 3px 4px 0 4px; border: 1px solid #eceef3; border-radius: 3px; display: flex; align-items: center; padding-left: 7px; gap: 1px; }
.info { margin-left: auto; letter-spacing: .08px; margin-right: 12px; }
.pg { height: 35px; border: 1px solid #dfe2e9; border-radius: 3px; font-size: 13px; color: #6b7685; display: flex; align-items: center; justify-content: center; padding-bottom: 2px; }
.prev { width: 76px; }
.cur { width: 35px; margin: 0 7px; background: #57b2bb; border-color: #57b2bb; color: #fff; }
.next { width: 53px; }
.scroll { height: 14px; flex: none; background: #e4e8ec; padding: 2px 3px; }
.scroll i { display: block; width: 1029px; height: 9px; border-radius: 5px; background: #a6a6a6; }

/* floating recorder palette */
.rec { position: absolute; left: 1414px; top: 525px; width: 26px; height: 126px; background: #1a1a1a; border-radius: 4px 0 0 4px; display: flex; flex-direction: column; align-items: center; gap: 10px; padding-top: 3px; }
.rec svg:first-child { margin-bottom: -3px; }
.rec svg:last-child { margin-top: -1px; }

/* taskbar */
.taskbar { height: 40px; flex: none; display: flex; background: linear-gradient(90deg, #1d1d1d 0, #20242a 340px, #24343a 480px, #23282e 600px, #23282f 900px, #242b34 1000px, #2b3a46 1150px, #2f3b43 1440px); font-family: "Open Sans", sans-serif; color: #fff; }
.start { width: 48px; display: flex; align-items: center; justify-content: center; }
.wsearch { width: 288px; background: #f2f2f2; border: 1px solid #c8c8c8; border-left-color: #ddd; display: flex; align-items: center; padding-left: 11px; color: #333; font-size: 14px; }
.wsearch span { margin-left: 10px; letter-spacing: -.05px; }
.plane { margin: 0 8px 0 auto; }
.ti { width: 48px; display: flex; align-items: center; justify-content: center; flex: none; }
.w52 { width: 52px; } .w46 { width: 46px; }
.run { box-shadow: inset 0 -2px #76b9ed; width: 40px; margin: 0 5px 0 4px; }
.hexrun { margin: 0 5px 0 4px; }
.note { background: #ad672f; box-shadow: inset 0 -2px #f57a10; }
.zoom div { width: 24px; height: 24px; border-radius: 9px; background: #1f5ceb; font-size: 13px; font-weight: 600; line-height: 21px; text-align: center; letter-spacing: -.5px; position: relative; }
.zoom i { position: absolute; right: -1px; bottom: 0; width: 8px; height: 8px; border-radius: 50%; background: #f03540; }
.zoom { margin: 0 5px 0 5px; }
.chrome { background: #51575e; box-shadow: inset 0 -2px #76b9ed; }
.tray { margin-left: auto; width: 311px; display: flex; align-items: center; border-right: 1px solid #6a747c; margin-right: 4px; }
.tray > svg, .tray > div, .tray > span { flex: none; }
.tray > svg:first-child { margin: 0 6px 0 3px; }
.hum { font-size: 13.5px; width: 86px; letter-spacing: -.15px; white-space: nowrap; margin-left: 1px; }
.up { margin-left: 9px; margin-right: 11px; }
.vol { margin-left: 6px; }
.clock { width: 72px; text-align: center; font-size: 11.5px; line-height: 18px; letter-spacing: -.3px; margin-left: 0; white-space: nowrap; }
.notif { position: relative; margin-left: 8px; }
.notif i { position: absolute; left: 7px; top: 7px; width: 16px; height: 16px; border: 1px solid #9aa2a8; border-radius: 50%; background: #3a444c; font-size: 10px; line-height: 14px; text-align: center; }
```
